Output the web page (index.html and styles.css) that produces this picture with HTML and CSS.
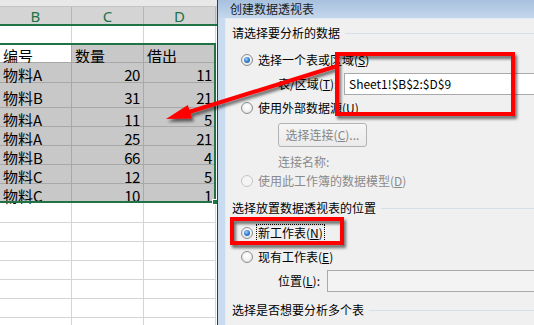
FILE: index.html
```html
<!DOCTYPE html>
<html lang="zh-CN">
<head>
<meta charset="utf-8">
<title>创建数据透视表</title>
<link rel="stylesheet" href="styles.css">
</head>
<body>
<div class="screen">
  <div class="sheet">
    <div class="strip"></div>
    <div class="colhead">
      <div class="ch">B</div><div class="ch">C</div><div class="ch">D</div>
    </div>
    <div class="grid">
      <div class="row h18"><div class="c"></div><div class="c"></div><div class="c"></div></div>
      <div class="row sel h19"><div class="c active">编号</div><div class="c">数量</div><div class="c">借出</div></div>
      <div class="row sel h20"><div class="c">物料A</div><div class="c num">20</div><div class="c num">11</div></div>
      <div class="row sel h25"><div class="c">物料B</div><div class="c num">31</div><div class="c num">21</div></div>
      <div class="row sel h19"><div class="c">物料A</div><div class="c num">11</div><div class="c num">5</div></div>
      <div class="row sel h19"><div class="c">物料A</div><div class="c num">25</div><div class="c num">21</div></div>
      <div class="row sel h19"><div class="c">物料B</div><div class="c num">66</div><div class="c num">4</div></div>
      <div class="row sel h19"><div class="c">物料C</div><div class="c num">12</div><div class="c num">5</div></div>
      <div class="row sel h19"><div class="c">物料C</div><div class="c num">10</div><div class="c num">1</div></div>
      <div class="row h20"><div class="c"></div><div class="c"></div><div class="c"></div></div>
      <div class="row h19"><div class="c"></div><div class="c"></div><div class="c"></div></div>
      <div class="row h19"><div class="c"></div><div class="c"></div><div class="c"></div></div>
      <div class="row h19"><div class="c"></div><div class="c"></div><div class="c"></div></div>
      <div class="row h19"><div class="c"></div><div class="c"></div><div class="c"></div></div>
      <div class="row h19"><div class="c"></div><div class="c"></div><div class="c"></div></div>
      <div class="row h19"><div class="c"></div><div class="c"></div><div class="c"></div></div>
    </div>
    <div class="selbox"></div>
    <div class="handle"></div>
  </div>

  <div class="dialog">
    <div class="titlebar">创建数据透视表</div>
    <div class="frame">
      <div class="body">
        <div class="group g1"><span>请选择要分析的数据</span><i class="gline"></i></div>
        <div class="opt o1"><span class="radio on"></span><span class="olabel">选择一个表或区域(<u>S</u>)</span></div>
        <div class="field f1"><span class="flabel w66">表/区域(<u>T</u>):</span><div class="input white">Sheet1!$B$2:$D$9</div></div>
        <div class="opt o2"><span class="radio"></span><span class="olabel">使用外部数据源(<u>U</u>)</span></div>
        <div class="btnrow"><div class="btn">选择连接(<u>C</u>)...</div></div>
        <div class="conn">连接名称:</div>
        <div class="opt o3 disabled"><span class="radio dis"></span><span class="olabel">使用此工作簿的数据模型(<u>D</u>)</span></div>
        <div class="group g2"><span>选择放置数据透视表的位置</span><i class="gline"></i></div>
        <div class="opt o4"><span class="radio on"></span><span class="olabel focus">新工作表(<u>N</u>)</span></div>
        <div class="opt o5"><span class="radio"></span><span class="olabel">现有工作表(<u>E</u>)</span></div>
        <div class="field f2"><span class="flabel w49">位置(<u>L</u>):</span><div class="input grey"></div></div>
        <div class="group g3"><span>选择是否想要分析多个表</span><i class="gline"></i></div>
      </div>
    </div>
  </div>

  <svg class="annot" width="534" height="325" viewBox="0 0 534 325">
    <defs>
      <filter id="sh" x="-20%" y="-20%" width="140%" height="160%">
        <feDropShadow dx="2" dy="3" stdDeviation="1.6" flood-color="#000" flood-opacity="0.55"/>
      </filter>
    </defs>
    <g filter="url(#sh)">
      <rect x="337" y="54" width="176" height="60" fill="none" stroke="#ff0000" stroke-width="4"/>
      <rect x="232" y="219" width="110" height="24" fill="none" stroke="#ff0000" stroke-width="4"/>
      <line x1="337" y1="66" x2="189" y2="112" stroke="#ff0000" stroke-width="4"/>
      <polygon points="166,119 192,118.5 187.8,105.1" fill="#ff0000"/>
    </g>
  </svg>
</div>
</body>
</html>
```

FILE: styles.css
```css
* { box-sizing: border-box; margin: 0; padding: 0; }
html, body { width: 534px; height: 325px; overflow: hidden; background: #fff; }
body { font-family: "Noto Sans CJK SC", "Noto Sans", sans-serif; color: #000; }

.screen { position: relative; display: flex; width: 534px; height: 325px; overflow: hidden; }

/* ---------- spreadsheet ---------- */
.sheet { position: relative; width: 217px; flex: none; background: #fff; overflow: hidden; }
.strip { height: 7px; background: #e8e8e8; border-bottom: 1px solid #c4c4c4; }
.colhead { display: flex; height: 19px; background: #d4d4d4; border-bottom: 2px solid #217346; }
.ch { width: 72px; flex: none; border-right: 1px solid #b4b4b4; display: flex; align-items: center; justify-content: center; font-family: "Noto Sans", sans-serif; font-size: 15px; line-height: 15px; color: #217346; padding-top: 1px; }

.grid { display: flex; flex-direction: column; width: 216px; }
.row { display: flex; flex: none; border-bottom: 1px solid #d4d4d4; }
.row.sel { background: #c8c8c8; border-bottom-color: #a8a8a8; }
.h18 { height: 18px; }
.h19 { height: 19px; }
.h20 { height: 20px; }
.h25 { height: 25px; }
.c { width: 72px; flex: none; border-right: 1px solid #d4d4d4; display: flex; align-items: center; padding: 4px 3px 0 3px; font-size: 15px; line-height: 15px; white-space: nowrap; }
.row.sel .c { border-right-color: #a8a8a8; }
.c.active { background: #fff; }
.c.num { justify-content: flex-end; letter-spacing: -0.4px; }

.selbox { position: absolute; left: -3px; top: 43px; width: 219px; height: 160px; border: 2px solid #217346; }
.handle { position: absolute; left: 212px; top: 199px; width: 6px; height: 6px; background: #217346; border: 1px solid #fff; }

/* ---------- dialog ---------- */
.dialog { flex: 1; display: flex; flex-direction: column; border-left: 1px solid #3b3b3b; background: #c9dbee; min-width: 0; }
.titlebar { height: 18px; flex: none; background: linear-gradient(#a7c1de, #c4d7ec); padding-left: 12px; font-size: 12px; line-height: 17px; color: #1a1a1a; white-space: nowrap; }
.frame { flex: 1; display: flex; padding-left: 7px; }
.body { flex: 1; display: flex; flex-direction: column; background: #f0f0f0; border-top: 1px solid #e3eaf2; border-left: 1px solid #e3eaf2; padding-left: 6px; font-size: 12px; line-height: 16px; white-space: nowrap; min-width: 0; }

.group { display: flex; align-items: center; height: 16px; flex: none; }
.gline { flex: 1; height: 1px; background: #d5dfe5; margin-left: 5px; }
.g1 { margin-top: 6px; }
.g2 { margin-top: 11px; }
.g3 { margin-top: 10px; }

.opt { display: flex; align-items: center; height: 16px; flex: none; padding-left: 9px; }
.o1 { margin-top: 11px; }
.o2 { margin-top: 5px; }
.o3 { margin-top: 3px; }
.o4 { margin-top: 9px; }
.o5 { margin-top: 8px; }
.disabled { color: #8a8a8a; }

.radio { position: relative; width: 12px; height: 12px; flex: none; border-radius: 50%; border: 1px solid #8c8e91; background: radial-gradient(circle at 50% 40%, #ffffff 0%, #f2f2f2 50%, #d6d6d6 100%); }
.radio.on::after { content: ""; position: absolute; left: 2px; top: 2px; width: 6px; height: 6px; border-radius: 50%; background: radial-gradient(circle at 40% 35%, #a7d4ff 0%, #3b86d4 45%, #17508f 100%); }
.radio.dis { border-color: #c4c4c4; background: #f4f4f4; }
.olabel { margin-left: 3px; padding: 0 1px; border: 1px dotted transparent; line-height: 16px; }
.olabel.focus { border-color: #000; }

.field { display: flex; align-items: center; height: 22px; flex: none; padding-left: 46px; }
.f1 { margin-top: 5px; }
.f2 { margin-top: 5px; }
.flabel { flex: none; }
.w66 { width: 66px; }
.w49 { width: 49px; }
.input { height: 22px; width: 260px; flex: none; border: 1px solid #a9a9a9; padding-left: 4px; display: flex; align-items: center; }
.input.white { background: #fff; }
.input.grey { background: #f3f3f3; }

.btnrow { display: flex; padding-left: 46px; margin-top: 7px; flex: none; }
.btn { width: 89px; height: 24px; border: 1px solid #b2b2b2; border-radius: 3px; background: linear-gradient(#f6f6f6, #ebebeb); color: #858585; display: flex; align-items: center; justify-content: center; }

.conn { padding-left: 46px; margin-top: 7px; height: 16px; flex: none; color: #8a8a8a; }

/* ---------- annotations ---------- */
.annot { position: absolute; left: 0; top: 0; pointer-events: none; }
```
